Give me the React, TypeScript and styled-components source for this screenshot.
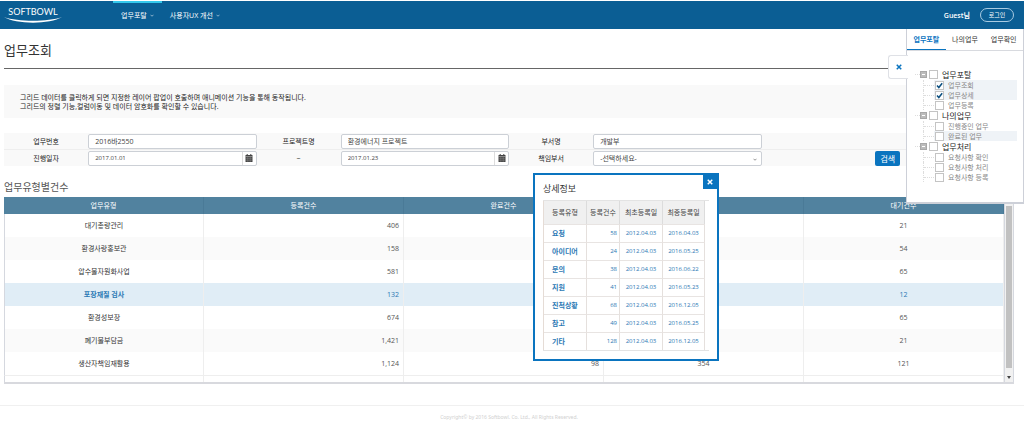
import React from "react";
import styled, { createGlobalStyle, css } from "styled-components";

const BLUE = "#0a74bf";
const LINK = "#2b78b4";

const GlobalStyle = createGlobalStyle`
  * { box-sizing: border-box; }
  body {
    margin: 0;
    background: #fff;
    color: #444;
    font-family: "Open Sans", "Noto Sans CJK KR", sans-serif;
    font-size: 7px;
    line-height: 9px;
  }
  button, input, select { font: inherit; color: inherit; margin: 0; }
  h1, h2, h3, p, ul { margin: 0; padding: 0; font-weight: 400; }
  ul { list-style: none; }
  table { border-collapse: separate; border-spacing: 0; }
`;

const Page = styled.div`
  position: relative;
  padding-top: 1px;
`;

/* ---------- header ---------- */
const Header = styled.header`
  display: flex;
  align-items: center;
  height: 28px;
  padding: 0 10px 0 4px;
  background: #0b5e94;
  color: #fff;
`;

const Logo = styled.a`
  display: flex;
  flex-direction: column;
  align-items: center;
  width: 58px;
  margin-right: 51px;
  color: #fff;
  font: 9px/10px Lato, sans-serif;
  text-decoration: none;

  svg { display: block; width: 58px; height: 6px; }
`;

const Nav = styled.nav`
  display: flex;
  align-self: stretch;
  flex: 1;
`;

const NavLink = styled.a<{ $active?: boolean }>`
  display: flex;
  align-items: center;
  gap: 3px;
  padding: 0 8px 2px;
  border-top: 2px solid ${(p) => (p.$active ? "#35c9ec" : "transparent")};
  color: #fff;
  text-decoration: none;

  svg { width: 4px; height: 3px; opacity: 0.6; }
`;

const Guest = styled.span`
  margin-right: 10px;
  font-weight: 600;
`;

const LoginButton = styled.button`
  width: 34px;
  height: 14px;
  padding: 0;
  border: 1px solid #a9cbe2;
  border-radius: 7px;
  background: transparent;
  color: #fff;
  font-size: 6px;
  line-height: 10px;
`;

/* ---------- content ---------- */
const Main = styled.main`
  padding: 0 10px 0 4px;
`;

const PageTitle = styled.h1`
  padding: 13px 0 10px;
  border-bottom: 1px solid #666;
  color: #333;
  font-size: 13px;
  line-height: 16px;
`;

const Notice = styled.p`
  margin-top: 16px;
  padding: 8px 16px 7px;
  background: #f9f9f9;
  color: #222;
`;

const SearchForm = styled.form`
  margin-top: 15px;
  background: #f9f9f9;
`;

const FormRow = styled.div`
  display: grid;
  grid-template-columns: 1fr 2fr 1fr 2fr 1fr 2fr 3fr;
  align-items: center;
  height: 16px;

  & + & { border-top: 1px solid #eee; height: 17px; }
`;

const FieldLabel = styled.label`
  color: #222;
  text-align: center;
`;

const control = css`
  width: 100%;
  height: 15px;
  padding: 0 6px;
  border: 1px solid #ccd0d6;
  border-radius: 2px;
  background: #fff;
  color: #444;
`;

const TextInput = styled.input`
  ${control}
  outline: none;
`;

const DateField = styled.div`
  ${control}
  display: flex;
  padding: 0;

  input {
    flex: 1;
    min-width: 0;
    padding: 0 6px;
    border: 0;
    background: transparent;
    font-size: 6px;
    outline: none;
  }
  button {
    display: flex;
    align-items: center;
    justify-content: center;
    width: 14px;
    padding: 0;
    border: 0;
    border-left: 1px solid #ddd;
    background: transparent;
  }
  svg { width: 8px; height: 8px; }
`;

const SelectField = styled.div`
  position: relative;

  select { ${control} appearance: none; }
  svg {
    position: absolute;
    right: 5px;
    top: 7px;
    width: 4px;
    height: 3px;
    color: #888;
    pointer-events: none;
  }
`;

const SearchButton = styled.button`
  justify-self: center;
  width: 25px;
  height: 15px;
  padding: 0;
  border: 0;
  border-radius: 2px;
  background: ${BLUE};
  color: #fff;
  font-size: 8px;
`;

const SectionTitle = styled.h2`
  margin: 14px 0 3px;
  color: #555;
  font-size: 10px;
  line-height: 14px;
`;

const GridFrame = styled.div`
  display: grid;
  grid-template-columns: 1fr 10px;
  border-bottom: 2px solid #d8d9de;
`;

const Grid = styled.table`
  width: 100%;
  table-layout: fixed;

  th {
    height: 17px;
    padding: 0;
    background: #51829f;
    border-right: 1px solid #4a7a97;
    color: #fff;
    font-weight: 400;
  }
  td {
    height: 23px;
    padding: 0 4px;
    border-right: 1px solid #eee;
    text-align: center;
  }
  td:first-child { border-left: 1px solid #d5d8df; }
  td:nth-child(2), td:nth-child(3) { text-align: right; }
`;

const GridRow = styled.tr<{ $tone: "plain" | "stripe" | "selected" }>`
  background: ${(p) => ({ plain: "#fff", stripe: "#fafafa", selected: "#e0edf6" })[p.$tone]};
  color: ${(p) => (p.$tone === "selected" ? LINK : "#555")};

  td:first-child {
    color: ${(p) => (p.$tone === "selected" ? LINK : "#333")};
    font-weight: ${(p) => (p.$tone === "selected" ? 700 : 400)};
  }
`;

const SpareRow = styled.tr`
  td { height: 7px; border-top: 1px solid #eee; }
`;

const ScrollBar = styled.div`
  display: flex;
  flex-direction: column;
  align-items: center;
  padding: 9px 1px 3px;
  border: 1px solid #d5d8df;
  border-width: 0 1px;
  background: #f1f1f1;

  svg { width: 4px; height: 3px; margin-top: 8px; }
`;

const ScrollThumb = styled.div`
  flex: 1;
  align-self: stretch;
  background: #c1c1c1;
`;

const Footer = styled.footer`
  margin-top: 21px;
  padding: 7px 10px 12px 4px;
  border-top: 1px solid #f0f0f0;
  color: #d0d0d0;
  font-family: "Noto Sans", sans-serif;
  font-size: 5px;
  text-align: center;
`;

/* ---------- detail popup ---------- */
const Popup = styled.section`
  position: absolute;
  left: 533px;
  top: 173px;
  width: 186px;
  padding: 8px 8px 8px;
  border: 2px solid ${BLUE};
  background: #fff;
`;

const PopupTitle = styled.h3`
  margin-bottom: 5px;
  color: #333;
  font-size: 9px;
  line-height: 12px;
`;

const PopupClose = styled.button`
  position: absolute;
  top: 0;
  right: 0;
  display: flex;
  align-items: center;
  justify-content: center;
  width: 14px;
  height: 14px;
  padding: 0;
  border: 0;
  background: ${BLUE};
  color: #fff;

  svg { width: 6px; height: 6px; }
`;

const DetailFrame = styled.div`
  border: 1px solid #e3e3e3;
  border-width: 1px 0;
`;

const DetailTable = styled.table`
  width: 162px;
  table-layout: fixed;
  border-left: 1px solid #e5dcd6;

  th {
    height: 23px;
    padding: 0;
    background: #f0f0f0;
    border-right: 1px solid #dcdcdc;
    color: #444;
    font-weight: 400;
  }
  td {
    height: 18px;
    padding: 0 2px;
    border-top: 1px solid #e8e4e2;
    border-right: 1px solid #e5e0dd;
    color: ${LINK};
    font-size: 6px;
    text-align: center;
  }
  td:first-child { padding-left: 8px; font-size: 7px; font-weight: 700; text-align: left; }
  td:nth-child(2) { text-align: right; }
`;

/* ---------- side drawer ---------- */
const Drawer = styled.aside`
  position: absolute;
  top: 29px;
  right: 0;
  width: 118px;
  height: 175px;
  border: 1px solid #cdd0d8;
  border-top: 0;
  border-bottom-width: 2px;
  background: #fff;
`;

const DrawerToggle = styled.button`
  position: absolute;
  left: -19px;
  top: 26px;
  display: flex;
  align-items: center;
  justify-content: center;
  width: 20px;
  height: 24px;
  padding: 0;
  border: 1px solid #dfe1e6;
  border-right: 0;
  border-radius: 3px 0 0 3px;
  background: #fff;
  color: ${BLUE};

  svg { width: 6px; height: 6px; }
`;

const Tabs = styled.div`
  display: grid;
  grid-template-columns: repeat(3, 1fr);
  border-bottom: 1px solid #d8dadf;
`;

const Tab = styled.button<{ $active?: boolean }>`
  height: 21px;
  padding: 1px 0 0;
  border: 0;
  border-bottom: 1px solid ${(p) => (p.$active ? BLUE : "transparent")};
  background: transparent;
  color: ${(p) => (p.$active ? BLUE : "#333")};
  font-weight: ${(p) => (p.$active ? 700 : 400)};
`;

const Tree = styled.ul`
  padding: 18px 6px 0 8px;
`;

const GroupRow = styled.div`
  display: flex;
  align-items: center;
  height: 11px;
  color: #222;
  font-size: 8px;

  &::before {
    content: "";
    width: 5px;
    border-top: 1px dotted #ddd;
  }
`;

const Collapse = styled.button`
  display: flex;
  align-items: center;
  justify-content: center;
  width: 7px;
  height: 7px;
  margin-right: 2px;
  padding: 0;
  border: 1px solid #a8a8a8;
  background: #bbb;

  &::before {
    content: "";
    width: 3px;
    height: 1px;
    background: #fff;
  }
`;

const CheckLabel = styled.label`
  display: flex;
  align-items: center;
  gap: 4px;
`;

const CheckBox = styled.input`
  appearance: none;
  display: block;
  width: 9px;
  height: 9px;
  border: 1px solid #c4c4c4;
  background: #fff;

  &:checked {
    background: #fff url("data:image/svg+xml,%3Csvg xmlns='http://www.w3.org/2000/svg' viewBox='0 0 7 7'%3E%3Cpath d='M1 3.6 2.8 5.5 6.2 1.2' fill='none' stroke='%230b4f80' stroke-width='1.5'/%3E%3C/svg%3E") center / 7px 7px no-repeat;
  }
`;

const Leaf = styled.li<{ $tinted?: boolean }>`
  display: flex;
  align-items: center;
  height: 10px;
  margin-left: 8px;
  border-left: 1px dotted #ddd;
  color: #888;

  &::before {
    content: "";
    width: 10px;
    border-top: 1px dotted #ddd;
  }

  label {
    flex: 1;
    height: 10px;
    padding-left: 1px;
    background: ${(p) => (p.$tinted ? "#eff3f7" : "transparent")};
  }
`;

const Chevron = () => (
  <svg viewBox="0 0 8 6" aria-hidden="true">
    <path d="M1 1.5 4 4.5 7 1.5" fill="none" stroke="currentColor" strokeWidth="1.8" />
  </svg>
);

const Cross = () => (
  <svg viewBox="0 0 8 8" aria-hidden="true">
    <path d="M1 1 7 7M7 1 1 7" fill="none" stroke="currentColor" strokeWidth="2" />
  </svg>
);

const CalendarIcon = () => (
  <svg viewBox="0 0 8 8" aria-hidden="true">
    <path d="M.5 1h7v7h-7z" fill="#444" />
    <path d="M2.2 0v1.6M5.8 0v1.6" stroke="#444" strokeWidth="1" />
    <path d="M.5 2.5h7" stroke="#ccc" strokeWidth=".5" />
    <path d="M1 4.3h6M1 6.2h6M2.8 3v5M5.2 3v5" stroke="#999" strokeWidth=".4" />
  </svg>
);

const DateInput = ({ id, value, label }: { id: string; value: string; label: string }) => (
  <DateField>
    <input id={id} defaultValue={value} />
    <button type="button" aria-label={label}>
      <CalendarIcon />
    </button>
  </DateField>
);

const gridRows = [
  ["대기총량관리", "406", "", "", "21"],
  ["환경사랑홍보관", "158", "", "", "54"],
  ["압수물자원화사업", "581", "", "", "65"],
  ["포장재질 검사", "132", "", "", "12"],
  ["환경성보장", "674", "", "", "65"],
  ["폐기물부담금", "1,421", "", "", "21"],
  ["생산자책임재활용", "1,124", "98", "354", "121"],
];
const selectedRow = 3;

const detailRows = [
  ["요청", "58", "2012.04.03", "2016.04.03"],
  ["아이디어", "24", "2012.04.03", "2016.05.25"],
  ["문의", "38", "2012.04.03", "2016.06.22"],
  ["지원", "41", "2012.04.03", "2016.05.23"],
  ["진척상황", "68", "2012.04.03", "2016.12.05"],
  ["참고", "49", "2012.04.03", "2016.05.25"],
  ["기타", "128", "2012.04.03", "2016.12.05"],
];

const tree = [
  {
    name: "업무포탈",
    items: [
      { name: "업무조회", checked: true, tinted: true },
      { name: "업무상세", checked: true, tinted: true },
      { name: "업무등록" },
    ],
  },
  { name: "나의업무", items: [{ name: "진행중인 업무" }, { name: "완료된 업무", tinted: true }] },
  { name: "업무처리", items: [{ name: "요청사항 확인" }, { name: "요청사항 처리" }, { name: "요청사항 등록" }] },
] as { name: string; items: { name: string; checked?: boolean; tinted?: boolean }[] }[];

const rowTone = (i: number) => (i === selectedRow ? "selected" : i % 2 ? "stripe" : "plain");

export default function App() {
  return (
    <Page>
      <GlobalStyle />
      <Header>
        <Logo href="#">
          SOFTBOWL
          <svg viewBox="0 0 58 6" aria-hidden="true">
            <path d="M0 0C14 5 44 5 58 0 46 7.5 12 7.5 0 0Z" fill="#fff" />
          </svg>
        </Logo>
        <Nav>
          <NavLink href="#" $active>
            업무포탈
            <Chevron />
          </NavLink>
          <NavLink href="#">
            사용자UX 개선
            <Chevron />
          </NavLink>
        </Nav>
        <Guest>Guest님</Guest>
        <LoginButton>로그인</LoginButton>
      </Header>

      <Main>
        <PageTitle>업무조회</PageTitle>
        <Notice>
          그리드 데이터를 클릭하게 되면 지정한 레이어 팝업이 호출하며 애니메이션 기능을 통해 동작됩니다.
          <br />
          그리드의 정렬 기능,컬럼이동 및 데이터 암호화를 확인할 수 있습니다.
        </Notice>

        <SearchForm onSubmit={(e) => e.preventDefault()}>
          <FormRow>
            <FieldLabel htmlFor="taskNo">업무번호</FieldLabel>
            <TextInput id="taskNo" defaultValue="2016바2550" />
            <FieldLabel htmlFor="project">프로젝트명</FieldLabel>
            <TextInput id="project" defaultValue="환경에너지 프로젝트" />
            <FieldLabel htmlFor="dept">부서명</FieldLabel>
            <TextInput id="dept" defaultValue="개발부" />
          </FormRow>
          <FormRow>
            <FieldLabel htmlFor="from">진행일자</FieldLabel>
            <DateInput id="from" value="2017.01.01" label="시작일 선택" />
            <FieldLabel htmlFor="to">~</FieldLabel>
            <DateInput id="to" value="2017.01.23" label="종료일 선택" />
            <FieldLabel htmlFor="owner">책임부서</FieldLabel>
            <SelectField>
              <select id="owner">
                <option>-선택하세요-</option>
              </select>
              <Chevron />
            </SelectField>
            <SearchButton type="submit">검색</SearchButton>
          </FormRow>
        </SearchForm>

        <SectionTitle>업무유형별건수</SectionTitle>
        <GridFrame>
          <Grid>
            <thead>
              <tr>
                <th>업무유형</th>
                <th>등록건수</th>
                <th>완료건수</th>
                <th />
                <th>대기건수</th>
              </tr>
            </thead>
            <tbody>
              {gridRows.map((cells, i) => (
                <GridRow key={cells[0]} $tone={rowTone(i)}>
                  {cells.map((cell, c) => (
                    <td key={c}>{cell}</td>
                  ))}
                </GridRow>
              ))}
              <SpareRow>
                <td />
                <td />
                <td />
                <td />
                <td />
              </SpareRow>
            </tbody>
          </Grid>
          <ScrollBar aria-hidden="true">
            <ScrollThumb />
            <svg viewBox="0 0 4 3">
              <path d="M0 0h4L2 3z" fill="#444" />
            </svg>
          </ScrollBar>
        </GridFrame>
      </Main>
      <Footer>Copyright© by 2016 Softbowl. Co. Ltd., All Rights Reserved.</Footer>

      <Popup role="dialog" aria-labelledby="detailTitle">
        <PopupTitle id="detailTitle">상세정보</PopupTitle>
        <PopupClose aria-label="닫기">
          <Cross />
        </PopupClose>
        <DetailFrame>
          <DetailTable>
            <colgroup>
              <col width="43" />
              <col width="33" />
              <col width="43" />
              <col width="42" />
            </colgroup>
            <thead>
              <tr>
                <th>등록유형</th>
                <th>등록건수</th>
                <th>최초등록일</th>
                <th>최종등록일</th>
              </tr>
            </thead>
            <tbody>
              {detailRows.map((cells) => (
                <tr key={cells[0]}>
                  {cells.map((cell, c) => (
                    <td key={c}>{cell}</td>
                  ))}
                </tr>
              ))}
            </tbody>
          </DetailTable>
        </DetailFrame>
      </Popup>

      <Drawer>
        <DrawerToggle aria-label="메뉴 닫기">
          <Cross />
        </DrawerToggle>
        <Tabs role="tablist">
          <Tab role="tab" aria-selected="true" $active>업무포탈</Tab>
          <Tab role="tab" aria-selected="false">나의업무</Tab>
          <Tab role="tab" aria-selected="false">업무확인</Tab>
        </Tabs>
        <Tree>
          {tree.map((group) => (
            <li key={group.name}>
              <GroupRow>
                <Collapse aria-label={`${group.name} 접기`} />
                <CheckLabel>
                  <CheckBox type="checkbox" />
                  {group.name}
                </CheckLabel>
              </GroupRow>
              <ul>
                {group.items.map((item) => (
                  <Leaf key={item.name} $tinted={item.tinted}>
                    <CheckLabel>
                      <CheckBox type="checkbox" defaultChecked={item.checked} />
                      {item.name}
                    </CheckLabel>
                  </Leaf>
                ))}
              </ul>
            </li>
          ))}
        </Tree>
      </Drawer>
    </Page>
  );
}
